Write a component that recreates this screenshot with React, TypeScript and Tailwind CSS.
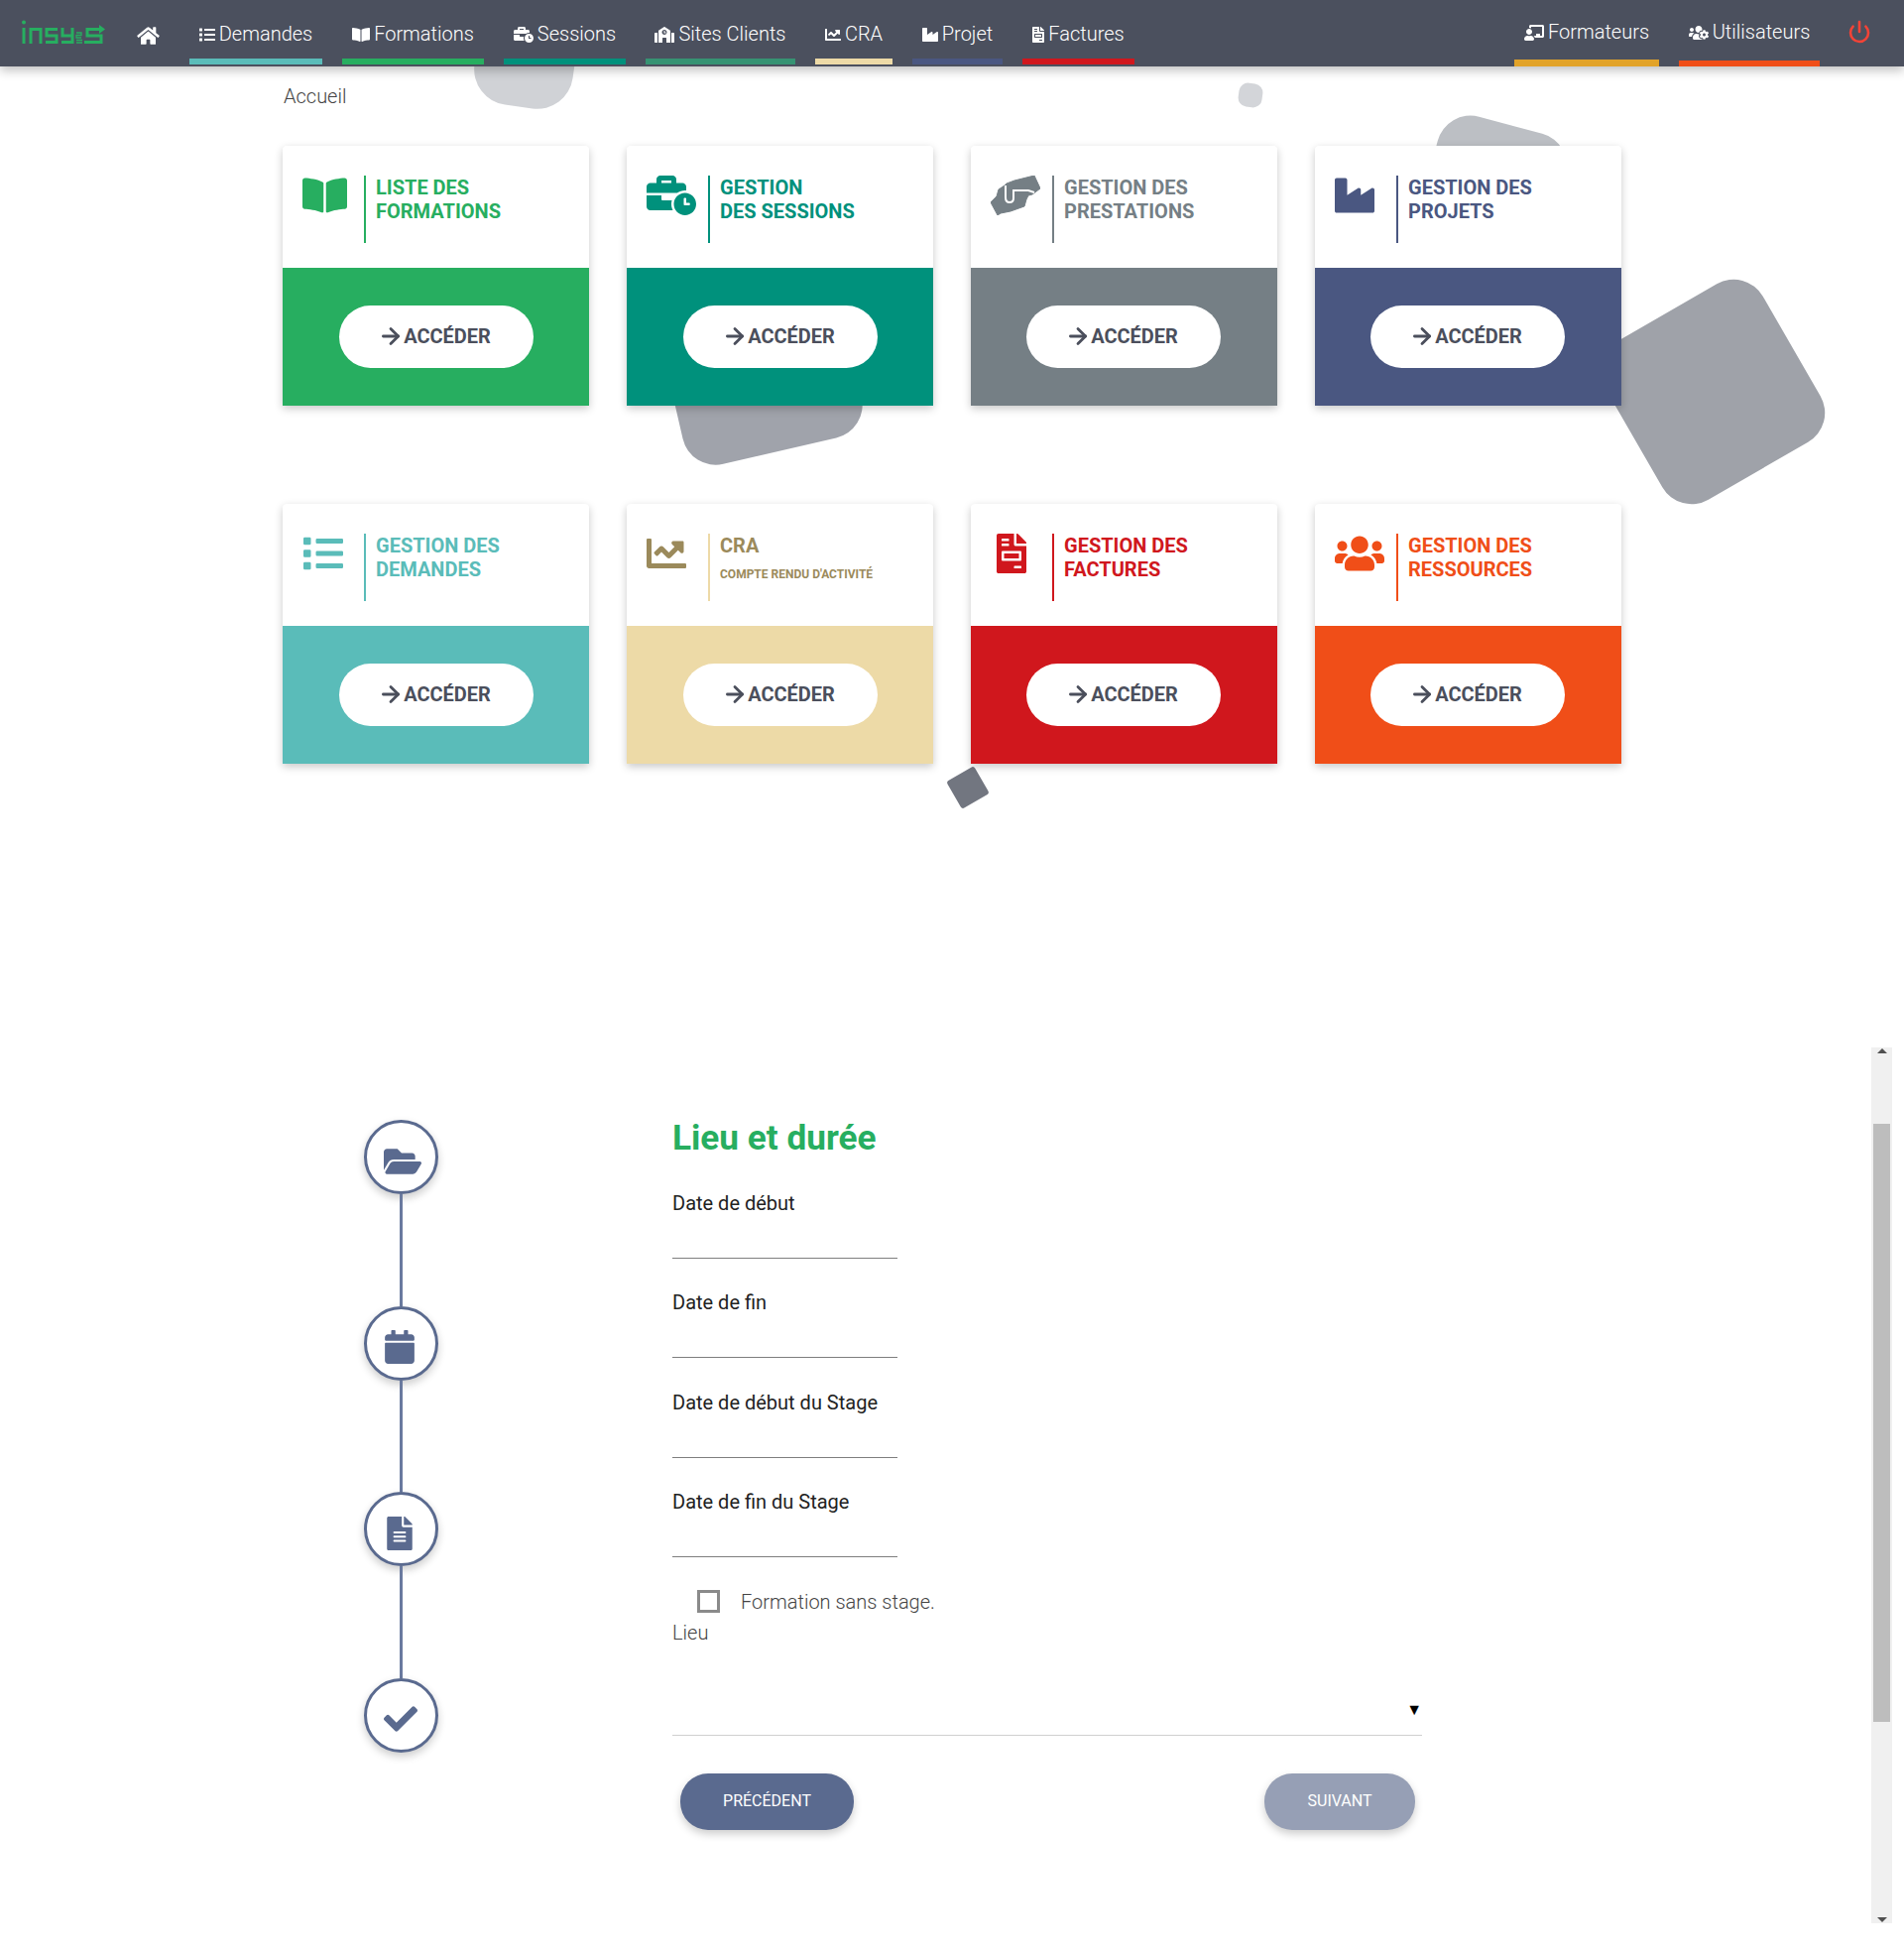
import React from "react";
import {
  FaHome, FaList, FaBookOpen, FaBusinessTime, FaSchool, FaChartLine, FaIndustry, FaFileInvoice,
  FaChalkboardTeacher, FaUsersCog, FaUsers, FaFolderOpen, FaCalendar, FaFileAlt, FaCheck,
} from "react-icons/fa";
import { ArrowRight, Power } from "lucide-react";

const Hands = ({ className }: { className?: string }) => (
  <svg viewBox="0 0 50 40" className={className} fill="currentColor">
    <path d="M44 0 L50 13 L42 19 L38 20 L36 24 L34 31 L20 36 L10 38 L7 40 L0 27 L6 21 L8 14 L14 10 L16 8 L24 5 Z" strokeLinejoin="round" stroke="currentColor" strokeWidth="1" />
    <path d="M15 10 V22 Q15 27 19 27 Q23 27 23 23 V15 H38 L44 17" fill="none" stroke="white" strokeWidth="2" />
  </svg>
);

const Logo = () => (
  <svg viewBox="0 0 90 26" className="h-[26px] w-[90px]" fill="none" stroke="#27ae60" strokeWidth="3">
    <circle cx="3" cy="2.500" r="2" fill="#27ae60" stroke="none" />
    <path d="M3 8 V24" />
    <path d="M10 24 V9.500 H20 V24" />
    <path d="M37 9.500 H26 V16 H36 V22.500 H25" />
    <path d="M42 8 V16 H52 M52 8 V22.500 H41" />
    <path d="M56 13 H61 V15.500 H56 V18 H61 M56 20.500 H62 M56 23 H62" strokeWidth="1.300" />
    <path d="M83 9.500 H67 V16 H81 V22.500 H64" />
    <path d="M79 5 L85 9.500 L79 14 Z" fill="#27ae60" stroke="none" />
  </svg>
);

const navLeft = [
  { label: "Demandes", Icon: FaList, iw: "w-[16px]", bar: "bg-[#5abcb9]", w: "w-[134px]" },
  { label: "Formations", Icon: FaBookOpen, iw: "w-[18px]", bar: "bg-[#27ae60]", w: "w-[143px]" },
  { label: "Sessions", Icon: FaBusinessTime, iw: "w-[20px]", bar: "bg-[#00917c]", w: "w-[123px]" },
  { label: "Sites Clients", Icon: FaSchool, iw: "w-[20px]", bar: "bg-[#369373]", w: "w-[151px]" },
  { label: "CRA", Icon: FaChartLine, iw: "w-[16px]", bar: "bg-[#eddaa7]", w: "w-[78px]" },
  { label: "Projet", Icon: FaIndustry, iw: "w-[16px]", bar: "bg-[#4a5781]", w: "w-[91px]" },
  { label: "Factures", Icon: FaFileInvoice, iw: "w-[12px]", bar: "bg-[#d0171d]", w: "w-[113px]" },
];

const cards = [
  { l1: "LISTE DES", l2: "FORMATIONS", Icon: FaBookOpen, iw: "w-[45px]", text: "text-[#27ae60]", line: "bg-[#27ae60]", bg: "bg-[#27ae60]", pad: "pl-[20px]", btn: "" },
  { l1: "GESTION", l2: "DES SESSIONS", Icon: FaBusinessTime, iw: "w-[50px]", text: "text-[#00917c]", line: "bg-[#00917c]", bg: "bg-[#00917c]", pad: "pl-[20px]", btn: "" },
  { l1: "GESTION DES", l2: "PRESTATIONS", Icon: null, iw: "", text: "text-[#757f85]", line: "bg-[#757f85]", bg: "bg-[#757f85]", pad: "pl-[20px]", btn: "mr-[2px]" },
  { l1: "GESTION DES", l2: "PROJETS", Icon: FaIndustry, iw: "w-[40px]", text: "text-[#4a5781]", line: "bg-[#4a5781]", bg: "bg-[#4a5781]", pad: "pl-[20px]", btn: "mr-[2px]" },
  { l1: "GESTION DES", l2: "DEMANDES", Icon: FaList, iw: "w-[40px]", text: "text-[#5abcb9]", line: "bg-[#5abcb9]", bg: "bg-[#5abcb9]", pad: "pl-[21px]", btn: "" },
  { l1: "CRA", sub: "COMPTE RENDU D'ACTIVITÉ", Icon: FaChartLine, iw: "w-[40px]", text: "text-[#9b8a5b]", line: "bg-[#eddaa7]", bg: "bg-[#eddaa7]", pad: "pl-[20px]", btn: "" },
  { l1: "GESTION DES", l2: "FACTURES", Icon: FaFileInvoice, iw: "w-[30px]", text: "text-[#d0171d]", line: "bg-[#d0171d]", bg: "bg-[#d0171d]", pad: "pl-[26px]", btn: "mr-[2px]" },
  { l1: "GESTION DES", l2: "RESSOURCES", Icon: FaUsers, iw: "w-[50px]", text: "text-[#f04e18]", line: "bg-[#f04e18]", bg: "bg-[#f04e18]", pad: "pl-[20px]", btn: "mr-[2px]" },
];

const steps = [
  { Icon: FaFolderOpen, iw: "w-[38px]" },
  { Icon: FaCalendar, iw: "ml-[1px] w-[30px]" },
  { Icon: FaFileAlt, iw: "ml-[3px] w-[26px]" },
  { Icon: FaCheck, iw: "w-[34px]" },
];
const fields = ["Date de début", "Date de fin", "Date de début du Stage", "Date de fin du Stage"];

export default function App() {
  return (
    <div className="relative h-[1968px] w-[1920px] overflow-hidden bg-white font-['Roboto',sans-serif]">
      <div className="absolute left-[480px] top-[8px] h-[100px] w-[100px] rotate-[8deg] rounded-[36px] bg-[#d0d2d6]" />
      <div className="absolute left-[1249px] top-[84px] h-[24px] w-[24px] rotate-[8deg] rounded-[9px] bg-[#d3d5d9]" />
      <div className="absolute left-[1439px] top-[124px] h-[134px] w-[134px] rotate-[15deg] rounded-[34px] bg-[#bcbfc4]" />
      <div className="absolute left-[673px] top-[272px] h-[185px] w-[185px] rotate-[-13deg] rounded-[34px] bg-[#a0a3ab]" />
      <div className="absolute left-[1635px] top-[303px] h-[184px] w-[184px] rotate-[-30deg] rounded-[34px] bg-[#9fa2a9]" />
      <div className="absolute left-[960px] top-[778px] h-[32px] w-[32px] rotate-[-30deg] rounded-[3px] bg-[#727680]" />

      <header className="relative z-20 flex h-[67px] items-start bg-[#4b505e] shadow-[0_4px_10px_rgba(0,0,0,0.25)]">
        <div className="ml-[21px] mt-[20px] w-[117px]"><Logo /></div>
        <FaHome className="mt-[26px] h-[20px] w-[23px] text-white" />
        <nav className="ml-[30px] flex gap-[20px]">
          {navLeft.map(({ label, Icon, iw, bar, w }) => (
            <div key={label} className={`${w} flex h-[65px] flex-col`}>
              <div className="flex h-[59px] items-start justify-center gap-[4px] pt-[21px] text-[20px] font-light leading-[26px] text-white">
                <Icon className={`mt-[6px] h-[16px] ${iw}`} />
                <span>{label}</span>
              </div>
              <div className={`h-[6px] ${bar}`} />
            </div>
          ))}
        </nav>
        <div className="ml-auto flex gap-[20px] pr-[85px]">
          <div className="flex h-[67px] w-[146px] flex-col">
            <div className="flex h-[60px] items-start justify-center gap-[4px] pt-[19px] text-[20px] font-light leading-[26px] text-white">
              <FaChalkboardTeacher className="mt-[6px] h-[16px] w-[20px]" />
              <span>Formateurs</span>
            </div>
            <div className="h-[7px] bg-[#e2a329]" />
          </div>
          <div className="flex h-[67px] w-[142px] flex-col">
            <div className="flex h-[61px] items-start justify-center gap-[4px] pt-[19px] text-[20px] font-light leading-[26px] text-white">
              <FaUsersCog className="mt-[6px] h-[16px] w-[20px]" />
              <span>Utilisateurs</span>
            </div>
            <div className="h-[6px] bg-[#f04e18]" />
          </div>
        </div>
        <Power className="absolute left-[1863px] top-[20px] h-[24px] w-[24px] text-[#f44336]" strokeWidth={2.6} />
      </header>

      <main className="relative z-10">
        <div className="ml-[286px] mt-[20px] h-[20px] text-[20px] font-light leading-[20px] text-[#444]">Accueil</div>
        <div className="ml-[285px] mt-[40px] grid w-[1350px] grid-cols-4 gap-x-[38px] gap-y-[99px]">
          {cards.map((c) => (
            <div key={c.l1 + c.l2} className="h-[262px] rounded-t-[4px] bg-white shadow-[0_3px_8px_rgba(0,0,0,0.22)]">
              <div className="relative flex h-[123px] pt-[30px]">
                <div className={`w-[82px] ${c.pad} ${c.text}`}>
                  {c.Icon ? <c.Icon className={`h-[40px] ${c.iw}`} /> : <Hands className="h-[40px] w-[50px]" />}
                </div>
                <div className={`h-[68px] w-[2px] ${c.line}`} />
                <div className={`ml-[10px] text-[20px] font-bold leading-[24px] ${c.text}`}>
                  <div>{c.l1}</div>
                  {c.l2 && <div>{c.l2}</div>}
                  {c.sub && <div className="mt-[8px] text-[12px] leading-[18px]">{c.sub}</div>}
                </div>
              </div>
              <div className={`flex h-[139px] items-center justify-center ${c.bg}`}>
                <div className={`flex h-[63px] w-[196px] items-center justify-center rounded-[32px] bg-white pb-[2px] pr-[3px] text-[20px] font-bold text-[#4b4f5c] ${c.btn}`}>
                  <ArrowRight className="h-[26px] w-[26px]" strokeWidth={2.6} />
                  ACCÉDER
                </div>
              </div>
            </div>
          ))}
        </div>

        <section className="mt-[286px] flex h-[883px] w-[1908px]">
          <div className="flex flex-1">
            <div className="ml-[367px] mt-[73px] flex w-[75px] flex-col items-center">
              {steps.map(({ Icon, iw }, i) => (
                <React.Fragment key={i}>
                  <div className="flex h-[75px] w-[75px] shrink-0 items-center rounded-full border-[3px] border-[#5a6a8f] bg-white pl-[17px] text-[#5a6a8f] shadow-[0_4px_8px_rgba(0,0,0,0.2)]">
                    <Icon className={`mt-[8px] h-[34px] shrink-0 ${iw}`} />
                  </div>
                  {i < 3 && <div className="h-[112.5px] w-[3px] bg-[#6a7a9f]" />}
                </React.Fragment>
              ))}
            </div>
            <div className="ml-[236px] mt-[70px] w-[756px]">
              <h2 className="h-[40px] text-[35.2px] font-bold leading-[42px] text-[#27ae60]">Lieu et durée</h2>
              <div className="mt-[34.500px]">
                {fields.map((f) => (
                  <div key={f} className="mb-[32.500px]">
                    <div className="h-[24px] text-[20px] leading-[24px] text-[#222]">{f}</div>
                    <div className="h-[44px] w-[227px] border-b border-[#7e7e7e]" />
                  </div>
                ))}
              </div>
              <div className="ml-[25px] mt-[2.500px] flex h-[23px] items-center">
                <div className="h-[23px] w-[23px] border-[3px] border-[#8a8a8a]" />
                <span className="ml-[21px] mt-[2px] text-[20px] font-light text-[#444]">Formation sans stage.</span>
              </div>
              <div className="mt-[8px] h-[24px] text-[20px] font-light leading-[24px] text-[#444]">Lieu</div>
              <div className="flex h-[92px] items-start justify-end border-b border-[#d0d0d0] pt-[56px]">
                <span className="text-[16px] leading-[20px] text-black">▼</span>
              </div>
              <div className="mt-[38px] flex justify-between pl-[8px] pr-[7px]">
                <div className="flex h-[57px] w-[175px] items-center justify-center rounded-[28px] bg-[#5a6a8f] text-[16px] text-white shadow-[0_4px_8px_rgba(0,0,0,0.2)]">PRÉCÉDENT</div>
                <div className="flex h-[57px] w-[152px] items-center justify-center rounded-[28px] bg-[#969fb5] text-[16px] text-white shadow-[0_4px_8px_rgba(0,0,0,0.2)]">SUIVANT</div>
              </div>
            </div>
          </div>
          <div className="flex w-[21px] flex-col items-center bg-[#f0f0f0] text-[#505050]">
            <div className="mt-[1px] h-0 w-0 border-x-[5px] border-b-[5px] border-x-transparent border-b-[#505050]" />
            <div className="mt-[71px] h-[603px] w-[17px] bg-[#bdbdbd]" />
            <div className="mt-auto mb-[1px] h-0 w-0 border-x-[5px] border-t-[5px] border-x-transparent border-t-[#505050]" />
          </div>
        </section>
      </main>
    </div>
  );
}
